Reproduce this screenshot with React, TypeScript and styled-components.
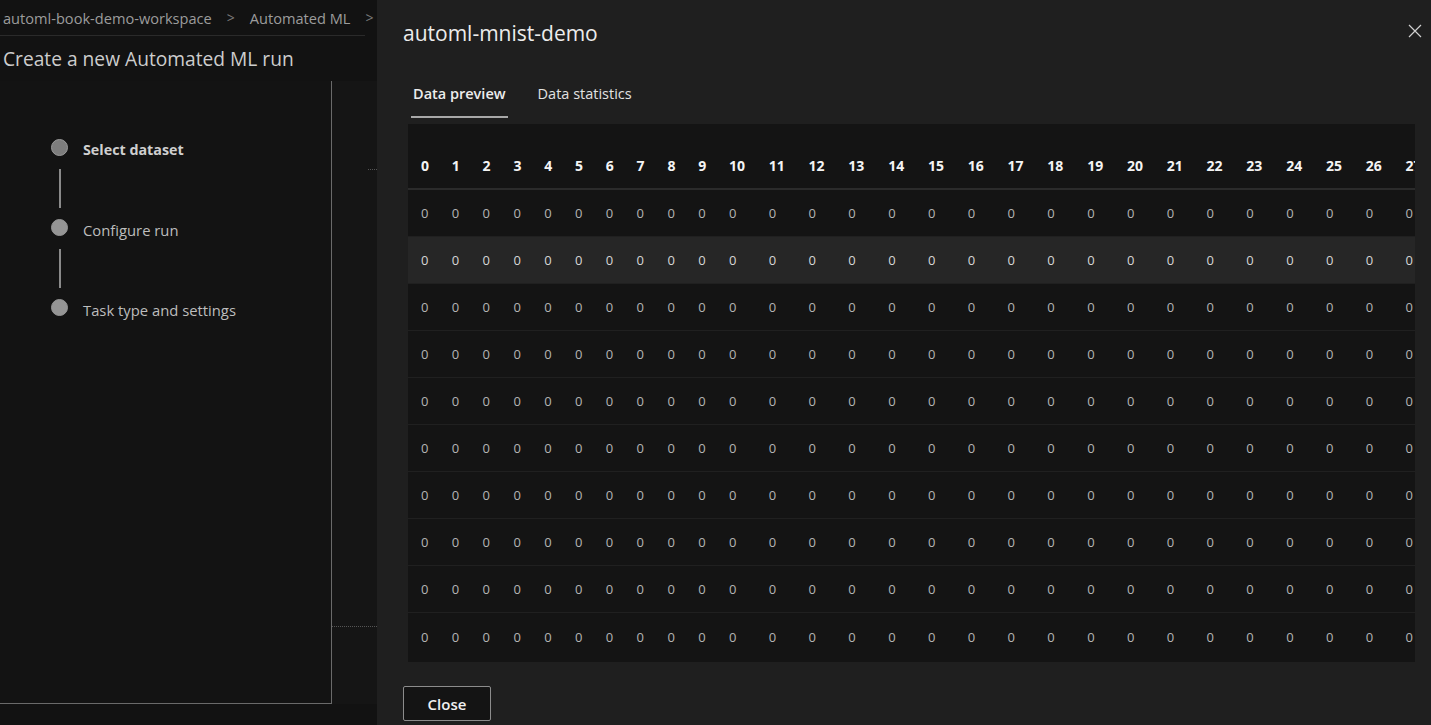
import React from "react";
import styled, { createGlobalStyle } from "styled-components";

const GlobalStyle = createGlobalStyle`
  html, body {
    margin: 0;
    padding: 0;
    background: #121212;
    overflow: hidden;
  }
  body {
    font-family: "Open Sans", "Noto Sans", sans-serif;
  }
`;

const Page = styled.div`
  position: relative;
  width: 100vw;
  height: 100vh;
  background: #121212;
  overflow: hidden;
`;

const Breadcrumb = styled.nav`
  display: flex;
  align-items: center;
  gap: 15px;
  width: 362px;
  height: 35px;
  padding-left: 3px;
  border-bottom: 1px solid #2a2a2a;
  font-size: 14.6px;
  color: #9c9c9c;
  white-space: nowrap;
`;

const Crumb = styled.span``;

const Chevron = styled.span`
  color: #7a7a7a;
  font-size: 14px;
`;

const PageTitle = styled.h1`
  margin: 9px 0 0 3px;
  font-size: 19.2px;
  line-height: 28px;
  font-weight: 400;
  color: #cdcdcd;
  white-space: nowrap;
`;

const Body = styled.div`
  display: flex;
  margin-top: 8px;
`;

const StepPanel = styled.div`
  width: 332px;
  height: 623px;
  box-sizing: border-box;
  border-right: 1px solid #6a6a6a;
  border-bottom: 1px solid #6a6a6a;
  background: #131313;
  padding: 58px 0 0 51px;
`;

const SideStrip = styled.div`
  width: 45px;
  height: 623px;
  display: flex;
  flex-direction: column;
  background: #151515;
`;

const StripMark = styled.div<{ $top: number; $inset: number }>`
  margin-top: ${(p) => p.$top}px;
  margin-left: ${(p) => p.$inset}px;
  border-top: 1px dotted #555;
`;

const StepRow = styled.div`
  display: flex;
  align-items: center;
  height: 17px;
  gap: 15px;
`;

const Dot = styled.span<{ $active?: boolean }>`
  width: 17px;
  height: 17px;
  border-radius: 50%;
  box-sizing: border-box;
  background: ${(p) => (p.$active ? "#7d7d7d" : "#959595")};
  border: 1px solid ${(p) => (p.$active ? "#9a9a9a" : "#959595")};
  flex: none;
`;

const StepLabel = styled.span<{ $active?: boolean }>`
  font-size: ${(p) => (p.$active ? "14.3px" : "14.8px")};
  font-weight: ${(p) => (p.$active ? 700 : 400)};
  color: ${(p) => (p.$active ? "#cfcfcf" : "#bdbdbd")};
  white-space: nowrap;
  position: relative;
  top: 2px;
`;

const Connector = styled.div`
  width: 2px;
  height: 39px;
  margin: 13px 0 11px 8px;
  background: #8a8a8a;
`;

const Modal = styled.aside`
  position: absolute;
  left: 377px;
  top: 0;
  right: 0;
  bottom: 0;
  background: #1f1f1f;
  padding: 18px 16px 0 26px;
  display: flex;
  flex-direction: column;
  box-sizing: border-box;
`;

const ModalTitle = styled.h2`
  margin: 0;
  font-size: 21px;
  line-height: 30px;
  font-weight: 400;
  color: #ececec;
`;

const CloseIcon = styled.button`
  position: absolute;
  top: 22px;
  right: 8px;
  width: 17px;
  height: 17px;
  padding: 0;
  border: none;
  background: transparent;
  display: flex;
  align-items: center;
  justify-content: center;
  cursor: pointer;
`;

const TabList = styled.div`
  display: flex;
  gap: 28px;
  margin: 26px 0 0 8px;
`;

const Tab = styled.div<{ $selected?: boolean }>`
  height: 44px;
  box-sizing: border-box;
  padding: 0 2px;
  line-height: 40px;
  font-size: 14.5px;
  font-weight: ${(p) => (p.$selected ? 600 : 400)};
  color: ${(p) => (p.$selected ? "#ededed" : "#e2e2e2")};
  border-bottom: 2px solid ${(p) => (p.$selected ? "#a8a8a8" : "transparent")};
  white-space: nowrap;
`;

const TableWrap = styled.div`
  margin: 6px 0 0 5px;
  width: 1007px;
  height: 538px;
  background: #141414;
  overflow: hidden;
`;

const Table = styled.table`
  table-layout: fixed;
  border-collapse: collapse;
  width: 1024.4px;
`;

const Col = styled.col<{ $wide?: boolean }>`
  width: ${(p) => (p.$wide ? 39.8 : 30.8)}px;
`;

const HeadCell = styled.th`
  height: 65px;
  box-sizing: border-box;
  padding: 0 0 12px 13px;
  vertical-align: bottom;
  text-align: left;
  font-size: 14px;
  line-height: 20px;
  font-weight: 700;
  color: #f4f4f4;
  border-bottom: 2px solid #2b2b2b;
  white-space: nowrap;
  overflow: hidden;
`;

const Row = styled.tr<{ $highlight?: boolean }>`
  height: 47.1px;
  background: ${(p) => (p.$highlight ? "#262626" : "transparent")};
  color: ${(p) => (p.$highlight ? "#d6d6d6" : "#b4b4b4")};
  border-bottom: 1px solid #202020;
  &:last-child {
    border-bottom: none;
  }
`;

const Cell = styled.td`
  padding: 0 0 0 13px;
  text-align: left;
  vertical-align: middle;
  font-size: 13px;
  white-space: nowrap;
`;

const CloseButton = styled.button`
  margin-top: 24px;
  width: 88px;
  height: 35px;
  border: 1px solid #8c8c8c;
  border-radius: 2px;
  background: #141414;
  color: #f0f0f0;
  font-family: inherit;
  font-size: 15px;
  font-weight: 600;
  cursor: pointer;
`;

const columns = Array.from({ length: 28 }, (_, i) => i);
const rows = Array.from({ length: 10 }, (_, i) => i);

export default function App() {
  return (
    <>
      <GlobalStyle />
      <Page>
        <Breadcrumb>
          <Crumb>automl-book-demo-workspace</Crumb>
          <Chevron>&gt;</Chevron>
          <Crumb>Automated ML</Crumb>
          <Chevron>&gt;</Chevron>
        </Breadcrumb>
        <PageTitle>Create a new Automated ML run</PageTitle>
        <Body>
          <StepPanel>
            <StepRow>
              <Dot $active />
              <StepLabel $active>Select dataset</StepLabel>
            </StepRow>
            <Connector />
            <StepRow>
              <Dot />
              <StepLabel>Configure run</StepLabel>
            </StepRow>
            <Connector />
            <StepRow>
              <Dot />
              <StepLabel>Task type and settings</StepLabel>
            </StepRow>
          </StepPanel>
          <SideStrip>
            <StripMark $top={88} $inset={36} />
            <StripMark $top={456} $inset={0} />
          </SideStrip>
        </Body>

        <Modal>
          <ModalTitle>automl-mnist-demo</ModalTitle>
          <CloseIcon aria-label="Close">
            <svg width="14" height="14" viewBox="0 0 14 14">
              <path d="M1 1 L13 13 M13 1 L1 13" stroke="#d0d0d0" strokeWidth="1.2" fill="none" />
            </svg>
          </CloseIcon>
          <TabList>
            <Tab $selected>Data preview</Tab>
            <Tab>Data statistics</Tab>
          </TabList>
          <TableWrap>
            <Table>
              <colgroup>
                {columns.map((c) => (
                  <Col key={c} $wide={c >= 10} />
                ))}
              </colgroup>
              <thead>
                <tr>
                  {columns.map((c) => (
                    <HeadCell key={c}>{c}</HeadCell>
                  ))}
                </tr>
              </thead>
              <tbody>
                {rows.map((r) => (
                  <Row key={r} $highlight={r === 1}>
                    {columns.map((c) => (
                      <Cell key={c}>0</Cell>
                    ))}
                  </Row>
                ))}
              </tbody>
            </Table>
          </TableWrap>
          <CloseButton>Close</CloseButton>
        </Modal>
      </Page>
    </>
  );
}
